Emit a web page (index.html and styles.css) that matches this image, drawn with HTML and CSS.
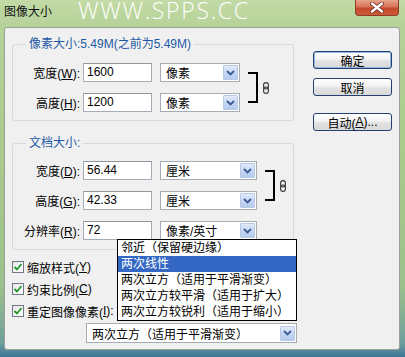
FILE: index.html
```html
<!DOCTYPE html>
<html lang="zh-CN">
<head>
  <meta charset="UTF-8">
  <title>图像大小</title>
  <link rel="stylesheet" href="styles.css">
</head>
<body>
  <div class="window">
    <div class="titlebar">
      <span class="title">图像大小</span>
      <span class="watermark">WWW.SPPS.CC</span>
      <span class="close">
        <svg width="14" height="11" viewBox="0 0 14 11">
          <path d="M2 1.5 L12 9.5 M12 1.5 L2 9.5" stroke="#6b2a1c" stroke-width="4" stroke-linecap="round"/>
          <path d="M2 1.5 L12 9.5 M12 1.5 L2 9.5" stroke="#fff" stroke-width="2.4" stroke-linecap="round"/>
        </svg>
      </span>
    </div>

    <div class="client">
      <div class="main">
        <fieldset class="group group-pixel">
          <legend>像素大小:5.49M(之前为5.49M)</legend>
          <div class="group-body">
            <div class="rows">
              <div class="row">
                <label>宽度(<u>W</u>):</label>
                <div class="field">1600</div>
                <div class="select">像素<span class="arrow"><svg width="9" height="6" viewBox="0 0 9 6"><path d="M1 1 L4.5 4.5 L8 1" fill="none" stroke="#3b5b95" stroke-width="1.8"/></svg></span></div>
              </div>
              <div class="row">
                <label>高度(<u>H</u>):</label>
                <div class="field">1200</div>
                <div class="select">像素<span class="arrow"><svg width="9" height="6" viewBox="0 0 9 6"><path d="M1 1 L4.5 4.5 L8 1" fill="none" stroke="#3b5b95" stroke-width="1.8"/></svg></span></div>
              </div>
            </div>
            <div class="link">
              <span class="bracket"></span>
              <svg class="chain" width="6" height="12" viewBox="0 0 6 12">
                <rect x="0.6" y="0.6" width="4.8" height="6.4" rx="2.4" fill="none" stroke="#333" stroke-width="1.1"/>
                <rect x="0.6" y="5" width="4.8" height="6.4" rx="2.4" fill="none" stroke="#333" stroke-width="1.1"/>
              </svg>
            </div>
          </div>
        </fieldset>

        <fieldset class="group group-doc">
          <legend>文档大小:</legend>
          <div class="group-body">
            <div class="rows">
              <div class="row">
                <label>宽度(<u>D</u>):</label>
                <div class="field">56.44</div>
                <div class="select">厘米<span class="arrow"><svg width="9" height="6" viewBox="0 0 9 6"><path d="M1 1 L4.5 4.5 L8 1" fill="none" stroke="#3b5b95" stroke-width="1.8"/></svg></span></div>
              </div>
              <div class="row">
                <label>高度(<u>G</u>):</label>
                <div class="field">42.33</div>
                <div class="select">厘米<span class="arrow"><svg width="9" height="6" viewBox="0 0 9 6"><path d="M1 1 L4.5 4.5 L8 1" fill="none" stroke="#3b5b95" stroke-width="1.8"/></svg></span></div>
              </div>
              <div class="row">
                <label>分辨率(<u>R</u>):</label>
                <div class="field">72</div>
                <div class="select">像素/英寸<span class="arrow"><svg width="9" height="6" viewBox="0 0 9 6"><path d="M1 1 L4.5 4.5 L8 1" fill="none" stroke="#3b5b95" stroke-width="1.8"/></svg></span></div>
              </div>
            </div>
            <div class="link">
              <span class="bracket"></span>
              <svg class="chain" width="6" height="12" viewBox="0 0 6 12">
                <rect x="0.6" y="0.6" width="4.8" height="6.4" rx="2.4" fill="none" stroke="#333" stroke-width="1.1"/>
                <rect x="0.6" y="5" width="4.8" height="6.4" rx="2.4" fill="none" stroke="#333" stroke-width="1.1"/>
              </svg>
            </div>
          </div>
        </fieldset>

        <div class="checks">
          <div class="check"><span class="box"><svg width="10" height="10" viewBox="0 0 10 10"><path d="M1.5 5 L4 7.5 L8.5 2" fill="none" stroke="#1f9a2a" stroke-width="1.8"/></svg></span>缩放样式(<u>Y</u>)</div>
          <div class="check"><span class="box"><svg width="10" height="10" viewBox="0 0 10 10"><path d="M1.5 5 L4 7.5 L8.5 2" fill="none" stroke="#1f9a2a" stroke-width="1.8"/></svg></span>约束比例(<u>C</u>)</div>
          <div class="check"><span class="box"><svg width="10" height="10" viewBox="0 0 10 10"><path d="M1.5 5 L4 7.5 L8.5 2" fill="none" stroke="#1f9a2a" stroke-width="1.8"/></svg></span>重定图像像素(<u>I</u>):</div>
        </div>

        <div class="select resample">两次立方（适用于平滑渐变）<span class="arrow"><svg width="9" height="6" viewBox="0 0 9 6"><path d="M1 1 L4.5 4.5 L8 1" fill="none" stroke="#3b5b95" stroke-width="1.8"/></svg></span>
          <ul class="dropdown">
            <li>邻近（保留硬边缘）</li>
            <li class="selected">两次线性</li>
            <li>两次立方（适用于平滑渐变）</li>
            <li>两次立方较平滑（适用于扩大）</li>
            <li>两次立方较锐利（适用于缩小）</li>
          </ul>
        </div>
      </div>

      <div class="buttons">
        <div class="btn default">确定</div>
        <div class="btn">取消</div>
        <div class="btn auto">自动(<u>A</u>)...</div>
      </div>
    </div>
  </div>
</body>
</html>
```

FILE: styles.css
```css
body { margin: 0; font-family: "Liberation Sans", "Noto Sans CJK SC", sans-serif; font-size: 12px; color: #000; }
u { text-decoration: underline; }

.window {
  width: 405px; height: 357px; box-sizing: border-box; padding: 0 5px 7px 4px;
  display: flex; flex-direction: column; overflow: hidden;
  background: linear-gradient(180deg, #c3daa6 0%, #b4d197 8%, #a9ca8c 45%, #9cc08c 80%, #6f9f9c 96%, #3f7599 100%);
}

.titlebar { height: 27px; display: flex; align-items: flex-start; }
.title { margin-top: 5px; font-size: 12px; line-height: 14px; color: #111; }
.watermark { margin-left: 26px; font: 300 23px/20px "Open Sans", sans-serif; color: #fff; letter-spacing: 1.7px; white-space: nowrap; }
.close {
  margin-left: auto; margin-right: 1px; width: 44px; height: 16px; box-sizing: border-box;
  display: flex; align-items: center; justify-content: center;
  border: 1px solid #8b3b26; border-top: 0; border-radius: 0 0 4px 4px;
  background: linear-gradient(180deg, #e7a58c 0%, #d7735a 45%, #c24a2c 55%, #cf5b3a 100%);
}

.client {
  flex: 1; display: flex; padding: 8px 0 0 7px;
  border: 1px solid #97a597; border-radius: 3px; background: #f0f0f0;
}
.main { width: 282px; }

.group { margin: 0; padding: 0; min-width: 0; border: 1px solid #d3d9de; border-radius: 3px; }
.group legend { margin-left: 13px; padding: 0 3px; line-height: 16px; color: #1f59a6; }
.group-doc { margin-top: 14px; }
.group-body { display: flex; padding: 11px 0 8px 0; }
.group-doc .group-body { padding: 10px 0 9px 0; }

.rows { display: flex; flex-direction: column; gap: 11px; }
.row { display: flex; align-items: center; height: 19px; }
.row label { width: 70px; padding-right: 3px; box-sizing: border-box; text-align: right; white-space: nowrap; }
.field {
  width: 69px; height: 19px; box-sizing: border-box; padding-left: 3px; line-height: 17px;
  border: 1px solid #a5acb5; border-top-color: #8e959e; background: #fff;
}

.select {
  width: 80px; height: 19px; margin-left: 8px; box-sizing: border-box; padding-left: 5px;
  display: flex; align-items: center; position: relative;
  border: 1px solid #a5acb5; background: #fff; white-space: nowrap;
}
.group-doc .select { width: 97px; }
.select .arrow {
  margin-left: auto; margin-right: 1px; width: 15px; height: 15px; box-sizing: border-box;
  display: flex; align-items: center; justify-content: center;
  border: 1px solid #b7c9e6; border-radius: 1px;
  background: linear-gradient(180deg, #e1ebfb 0%, #c6d7f3 50%, #b6cbee 100%);
}

.link { display: flex; align-items: center; margin: 9px 0 0 8px; height: 31px; }
.bracket { width: 10px; height: 31px; box-sizing: border-box; border: 2px solid #000; border-left: 0; }
.chain { margin-left: 5px; }

.checks { margin-top: 6px; }
.check { display: flex; align-items: center; height: 22px; white-space: nowrap; }
.check .box {
  width: 12px; height: 12px; box-sizing: border-box; margin-right: 3px;
  display: flex; align-items: center; justify-content: center;
  border: 1px solid #6d7884; background: linear-gradient(135deg, #e8e8e8, #fff);
}

.resample { width: 211px; height: 20px; margin: 1px 0 0 74px; }

.dropdown {
  position: absolute; left: 30px; bottom: calc(100% + 3px); width: 180px;
  margin: 0; padding: 0; list-style: none; box-sizing: border-box;
  border: 1px solid #000; background: #fff;
}
.dropdown li { height: 16px; line-height: 16px; padding-left: 3px; white-space: nowrap; }
.dropdown li.selected { background: #3367c3; color: #fff; }

.buttons { margin: 15px 0 0 19px; display: flex; flex-direction: column; }
.btn {
  width: 79px; height: 18px; box-sizing: border-box; margin-bottom: 9px;
  display: flex; align-items: center; justify-content: center;
  border: 1px solid #253f6e; border-radius: 3px;
  background: linear-gradient(180deg, #ffffff 0%, #f2f2f2 45%, #e2e2e2 55%, #d9d9d9 100%);
}
.btn.default { box-shadow: inset 0 0 0 1px #8fb6e4; }
.btn.auto { margin-top: 8px; }
```
